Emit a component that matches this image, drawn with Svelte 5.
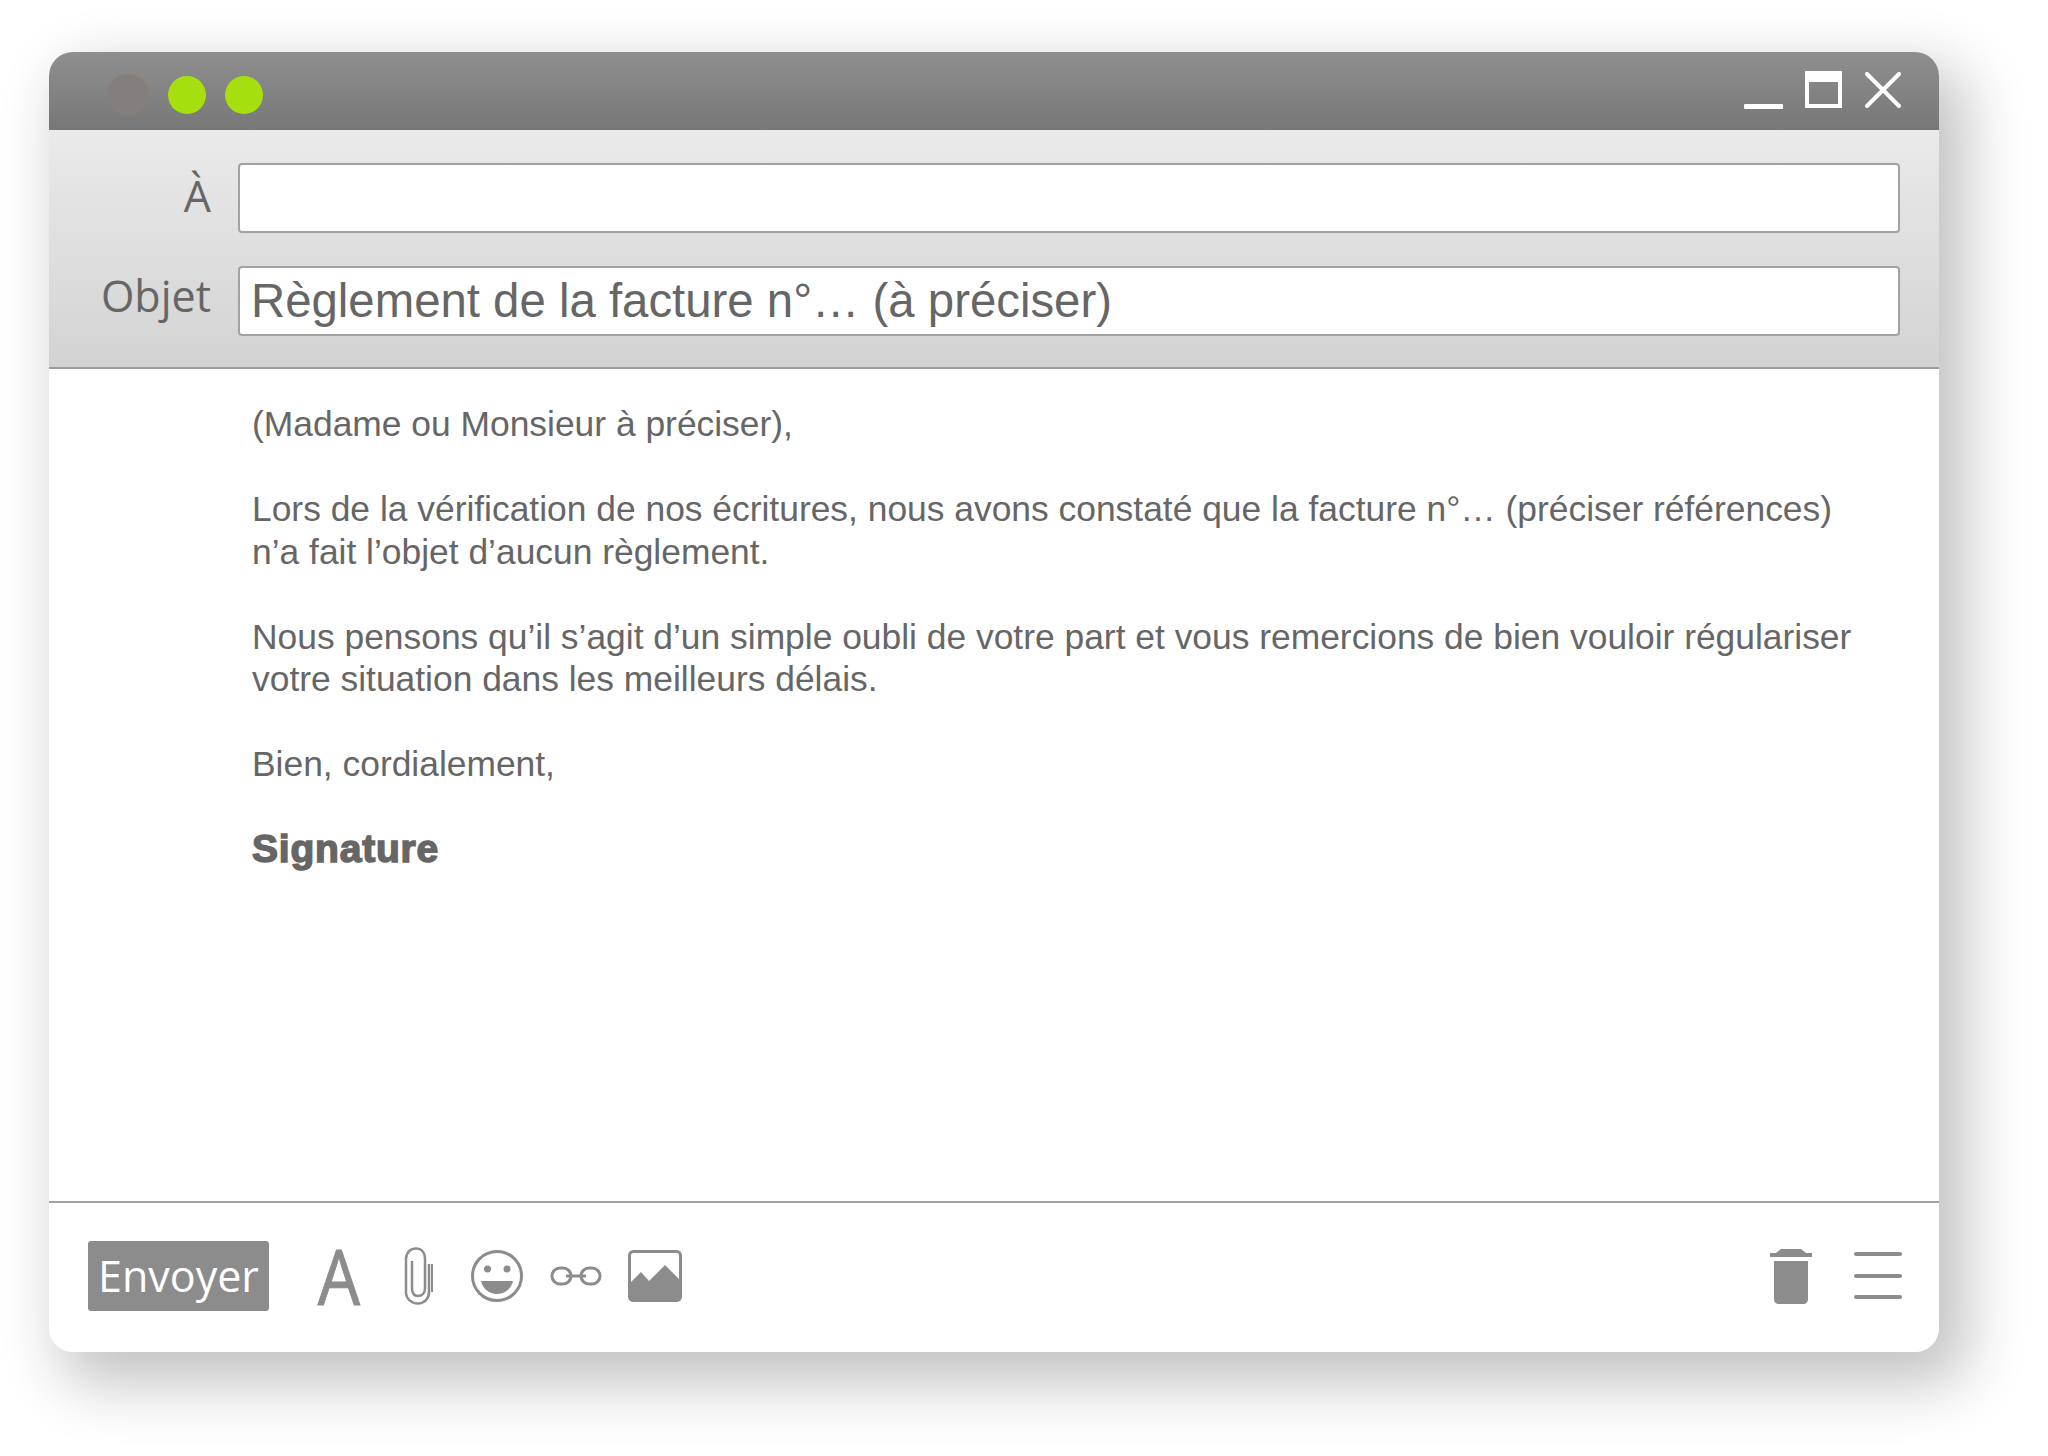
<script>
	const paragraphs = [
		'(Madame ou Monsieur à préciser),',
		'Lors de la vérification de nos écritures, nous avons constaté que la facture n°… (préciser références) n’a fait l’objet d’aucun règlement.',
		'Nous pensons qu’il s’agit d’un simple oubli de votre part et vous remercions de bien vouloir régulariser votre situation dans les meilleurs délais.',
		'Bien, cordialement,'
	];
</script>

<div class="page">
	<div class="window">
		<div class="titlebar">
			<div class="dots">
				<span class="dot first"></span>
				<span class="dot"></span>
				<span class="dot"></span>
			</div>
			<div class="controls">
				<span class="minimize"></span>
				<span class="maximize"></span>
				<svg class="close" width="36" height="36" viewBox="0 0 36 36">
					<path d="M2 2 L34 34 M34 2 L2 34" stroke="#fff" stroke-width="4" stroke-linecap="round" />
				</svg>
			</div>
		</div>

		<div class="header">
			<div class="row">
				<span class="label">À</span>
				<div class="field"></div>
			</div>
			<div class="row">
				<span class="label objet">Objet</span>
				<div class="field">Règlement de la facture n°… (à préciser)</div>
			</div>
		</div>

		<div class="message">
			{#each paragraphs as text}
				<p>{text}</p>
			{/each}
			<p class="signature">Signature</p>
		</div>

		<div class="footer">
			<button class="send">Envoyer</button>

			<span class="font-icon">A</span>

			<svg class="clip" width="32" height="58" viewBox="0 0 32 58" fill="none" stroke="#8c8c8c" stroke-width="2.5">
				<path d="M27 17 V45 C27 52 22 56.5 16 56.5 C9.5 56.5 4 52 4 45 V12 C4 5.5 8.5 1.5 14 1.5 C19.5 1.5 23 5.500 23 12 V41 C23 46 20 49 16 49 C12 49 10 46 10 41 V14" />
				<path d="M30 17 V45" stroke-width="2" />
			</svg>

			<svg class="smiley" width="54" height="54" viewBox="0 0 54 54">
				<ellipse cx="27" cy="27" rx="24.500" ry="24.500" fill="none" stroke="#8c8c8c" stroke-width="3" />
				<circle cx="17.500" cy="20" r="3.500" fill="#8c8c8c" />
				<circle cx="37" cy="20" r="3.500" fill="#8c8c8c" />
				<path d="M11 32 H43 C41 40 35 45 27 45 C19 45 13 40 11 32 Z" fill="#8c8c8c" />
			</svg>

			<svg class="chain" width="52" height="24" viewBox="0 0 52 24" fill="none" stroke="#8c8c8c" stroke-width="3">
				<rect x="2" y="4" width="19" height="16" rx="8" />
				<rect x="31" y="4" width="19" height="16" rx="8" />
				<path d="M16 12 H36" />
			</svg>

			<svg class="picture" width="54" height="52" viewBox="0 0 54 52">
				<rect x="1.500" y="1.500" width="51" height="49" rx="4" fill="#fff" stroke="#8c8c8c" stroke-width="3" />
				<path d="M2 33 L13 22 L21 31 L37 15 L52 30 V46 C52 49 50 51 47 51 H7 C4 51 2 49 2 46 Z" fill="#8c8c8c" />
			</svg>

			<svg class="trash" width="42" height="56" viewBox="0 0 42 56">
				<path d="M0 5 H6 L11 1 H31 L36 5 H42 V9 H0 Z" fill="#8c8c8c" />
				<path d="M4 13 H38 V51 C38 54 36 56 33 56 H9 C6 56 4 54 4 51 Z" fill="#8c8c8c" />
			</svg>

			<div class="menu">
				<span></span>
				<span></span>
				<span></span>
			</div>
		</div>
	</div>
</div>

<style>
	:global(body) {
		margin: 0;
		background: #fff;
	}

	.page {
		width: 2048px;
		height: 1456px;
		padding: 52px 109px 104px 49px;
		box-sizing: border-box;
		font-family: "Liberation Sans", Arial, sans-serif;
		color: #666;
	}

	.window {
		height: 1300px;
		display: flex;
		flex-direction: column;
		background: #fff;
		border-radius: 24px;
		box-shadow: 20px 24px 60px 8px rgba(0, 0, 0, 0.24);
		overflow: hidden;
	}

	.titlebar {
		height: 78px;
		flex: none;
		display: flex;
		align-items: flex-end;
		justify-content: space-between;
		background: linear-gradient(#8f8f8f, #777);
	}

	.dots {
		display: flex;
		align-items: center;
		gap: 19px;
		padding: 0 0 14px 58px;
	}

	.dot {
		width: 38px;
		height: 38px;
		border-radius: 50%;
		background: #a5e00e;
	}

	.dot.first {
		width: 42px;
		height: 42px;
		background: #857f7c;
	}

	.controls {
		display: flex;
		align-items: flex-end;
		gap: 22px;
		padding: 0 38px 21px 0;
	}

	.minimize {
		width: 39px;
		height: 5px;
		background: #fff;
		border-radius: 1px;
	}

	.maximize {
		width: 37px;
		height: 37px;
		box-sizing: border-box;
		border: 4px solid #fff;
		border-top-width: 11px;
		margin-bottom: 1px;
	}

	.close {
		display: block;
		margin-left: 1px;
		margin-bottom: 1px;
	}

	.header {
		height: 239px;
		flex: none;
		box-sizing: border-box;
		padding: 33px 39px 0 0;
		display: flex;
		flex-direction: column;
		gap: 33px;
		background: linear-gradient(#eaeaea, #d3d3d3);
		border-bottom: 2px solid #9c9c9c;
	}

	.row {
		display: flex;
		align-items: center;
		gap: 27px;
	}

	.label {
		width: 162px;
		margin-top: -4px;
		text-align: right;
		font-family: "Open Sans", sans-serif;
		font-size: 43px;
		line-height: 60px;
		color: #666;
		flex: none;
	}

	.label.objet {
		margin-top: -10px;
	}

	.field {
		flex: 1;
		height: 70px;
		box-sizing: border-box;
		padding-left: 11px;
		background: #fff;
		border: 2px solid #a2a2a2;
		border-radius: 4px;
		font-size: 47.350px;
		line-height: 66px;
		color: #666;
	}

	.message {
		flex: 1;
		padding: 34px 70px 0 203px;
		font-size: 35.400px;
		line-height: 42.500px;
		border-bottom: 2px solid #a2a2a2;
	}

	.message p {
		margin: 0 0 42.500px;
	}

	.signature {
		font-weight: 700;
		font-size: 39px;
		-webkit-text-stroke: 1.5px #666;
		letter-spacing: 0.8px;
	}

	.footer {
		height: 149px;
		flex: none;
		box-sizing: border-box;
		padding: 0 37px 4px 39px;
		display: flex;
		align-items: center;
		background: #fff;
	}

	.send {
		width: 181px;
		height: 70px;
		padding: 0;
		margin-right: 46px;
		border: none;
		border-radius: 3px;
		background: #8c8c8c;
		color: #fff;
		font-family: "Open Sans", sans-serif;
		font-size: 43px;
		line-height: 70px;
	}

	.font-icon {
		width: 46px;
		margin-right: 41px;
		font-family: "Open Sans", sans-serif;
		font-size: 76px;
		line-height: 70px;
		text-align: center;
		color: #8c8c8c;
		-webkit-text-stroke: 1px #8c8c8c;
		transform: scaleX(0.88);
	}

	.clip,
	.smiley,
	.chain,
	.picture,
	.trash {
		display: block;
		flex: none;
	}

	.clip {
		margin-right: 36px;
	}

	.smiley {
		margin-right: 26px;
	}

	.chain {
		margin-right: 26px;
	}

	.picture {
		margin-right: auto;
	}

	.trash {
		margin-right: 42px;
	}

	.menu {
		width: 48px;
		display: flex;
		flex-direction: column;
		gap: 17.500px;
	}

	.menu span {
		height: 4px;
		border-radius: 2px;
		background: #8c8c8c;
	}
</style>
